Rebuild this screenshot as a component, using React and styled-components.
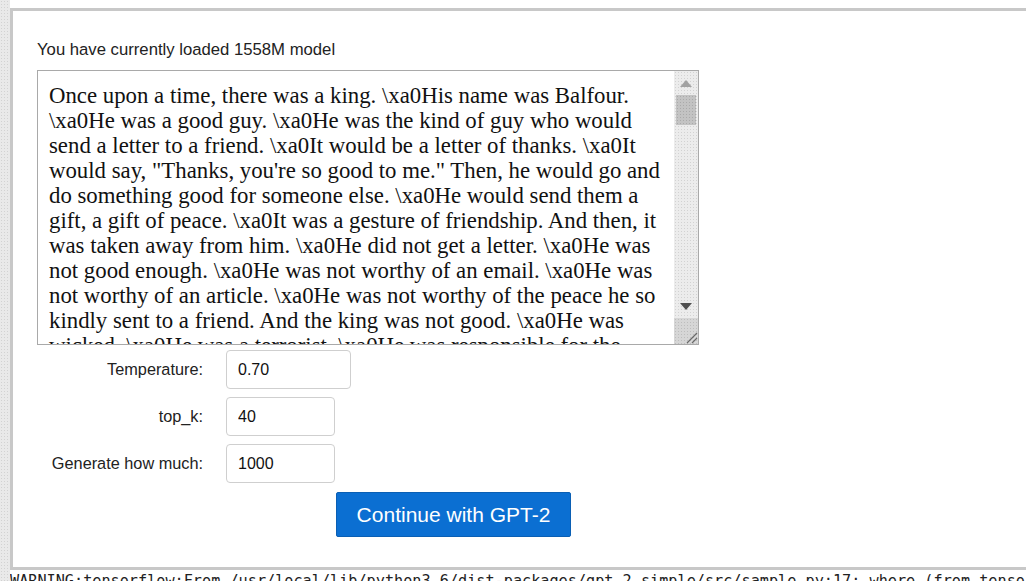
import React, { useState } from "react";
import styled, { createGlobalStyle } from "styled-components";

// ----- Global -----
const GlobalStyle = createGlobalStyle`
  html, body {
    margin: 0;
    padding: 0;
    background: #ffffff;
    overflow: hidden;
  }
  * {
    box-sizing: border-box;
  }
`;

const dots = `
  background-color: #e9e9e9;
  background-image: radial-gradient(#d2d2d2 0.6px, transparent 0.8px);
  background-size: 3px 3px;
`;

// ----- Styled Components -----
const Page = styled.div`
  display: flex;
  width: 1026px;
  height: 581px;
  overflow: hidden;
`;

const Strip = styled.div`
  flex: 0 0 10px;
  ${dots}
`;

const Main = styled.div`
  flex: 1;
  display: flex;
  flex-direction: column;
  padding-top: 8px;
  padding-right: 6px;
`;

const Frame = styled.div`
  border: 3px solid #c8c8c8;
  background: #fff;
  padding: 30px 24px 30px;
  display: flex;
  flex-direction: column;
  font-family: "Liberation Sans", Arial, sans-serif;
  color: #222;
`;

const Notice = styled.p`
  margin: 0 0 11px;
  font-size: 16.7px;
  line-height: 18px;
`;

const TextBox = styled.div`
  display: flex;
  width: 662px;
  height: 275px;
  border: 1px solid #a9a9a9;
  background: #fff;
`;

const Story = styled.textarea`
  flex: 1;
  border: none;
  outline: none;
  resize: none;
  overflow: hidden;
  white-space: pre;
  padding: 12px 0 0 11px;
  margin: 0;
  font-family: "Liberation Serif", "Times New Roman", serif;
  font-size: 22.8px;
  line-height: 25px;
  color: #111;
  background: transparent;
`;

const Scrollbar = styled.div`
  flex: 0 0 24px;
  display: flex;
  flex-direction: column;
  ${dots}
  background-color: #ececec;
`;

const ArrowButton = styled.div`
  flex: 0 0 ${({ tall }) => tall}px;
  display: flex;
  align-items: center;
  justify-content: center;
`;

const Triangle = styled.span`
  width: 0;
  height: 0;
  border-left: 6px solid transparent;
  border-right: 6px solid transparent;
  ${({ up, color }) =>
    up
      ? `border-bottom: 7px solid ${color};`
      : `border-top: 7px solid ${color};`}
`;

const Thumb = styled.div`
  flex: 0 0 30px;
  margin: 0 2px;
  background-color: #c3c3c3;
  background-image: radial-gradient(#aaaaaa 0.6px, transparent 0.8px);
  background-size: 3px 3px;
`;

const Track = styled.div`
  flex: 1;
`;

const Corner = styled.div`
  flex: 0 0 26px;
  background-color: #d6d6d6;
  background-image: radial-gradient(#bdbdbd 0.6px, transparent 0.8px);
  background-size: 3px 3px;
  display: flex;
  align-items: flex-end;
  justify-content: flex-end;
`;

const Settings = styled.div`
  display: grid;
  grid-template-columns: 166px auto;
  column-gap: 23px;
  row-gap: 8px;
  margin-top: 5px;
  align-items: center;
  justify-items: start;
`;

const Label = styled.label`
  justify-self: end;
  font-size: 16.3px;
  color: #222;
`;

const Field = styled.input`
  width: ${({ wide }) => (wide ? 125 : 109)}px;
  height: 39px;
  border: 1px solid #cfcfcf;
  border-radius: 4px;
  padding: 0 11px;
  font-family: "Liberation Sans", Arial, sans-serif;
  font-size: 16px;
  color: #111;
  outline: none;
`;

const Submit = styled.button`
  align-self: flex-start;
  margin: 9px 0 0 299px;
  width: 235px;
  height: 45px;
  border: 1px solid #0a5fb4;
  border-radius: 2px;
  background: #0b6fd2;
  color: #fff;
  font-family: "Liberation Sans", Arial, sans-serif;
  font-size: 21px;
  cursor: pointer;
`;

const Log = styled.pre`
  margin: 0;
  padding: 2px 0 0 0;
  font-family: "DejaVu Sans Mono", "Liberation Mono", monospace;
  font-size: 15.2px;
  line-height: 18px;
  color: #222;
  white-space: pre;
  overflow: hidden;
`;

const storyText = [
  "Once upon a time, there was a king. \\xa0His name was Balfour.",
  "\\xa0He was a good guy. \\xa0He was the kind of guy who would",
  "send a letter to a friend. \\xa0It would be a letter of thanks. \\xa0It",
  "would say, \"Thanks, you're so good to me.\" Then, he would go and",
  "do something good for someone else. \\xa0He would send them a",
  "gift, a gift of peace. \\xa0It was a gesture of friendship. And then, it",
  "was taken away from him. \\xa0He did not get a letter. \\xa0He was",
  "not good enough. \\xa0He was not worthy of an email. \\xa0He was",
  "not worthy of an article. \\xa0He was not worthy of the peace he so",
  "kindly sent to a friend. And the king was not good. \\xa0He was",
  "wicked. \\xa0He was a terrorist. \\xa0He was responsible for the",
].join("\n");

// ----- Main Component -----
const App = () => {
  const [text, setText] = useState(storyText);
  const [temperature, setTemperature] = useState("0.70");
  const [topK, setTopK] = useState("40");
  const [length, setLength] = useState("1000");

  return (
    <>
      <GlobalStyle />
      <Page>
        <Strip />
        <Main>
          <Frame>
            <Notice>You have currently loaded 1558M model</Notice>

            <TextBox>
              <Story value={text} onChange={(e) => setText(e.target.value)} />
              <Scrollbar>
                <ArrowButton tall={24}>
                  <Triangle up color="#a3a3a3" />
                </ArrowButton>
                <Thumb />
                <Track />
                <ArrowButton tall={24}>
                  <Triangle color="#505050" />
                </ArrowButton>
                <Corner>
                  <svg width="14" height="14" viewBox="0 0 14 14">
                    <path d="M13 3 L3 13 M13 8 L8 13" stroke="#6a6a6a" strokeWidth="1.2" />
                  </svg>
                </Corner>
              </Scrollbar>
            </TextBox>

            <Settings>
              <Label>Temperature:</Label>
              <Field wide value={temperature} onChange={(e) => setTemperature(e.target.value)} />
              <Label>top_k:</Label>
              <Field value={topK} onChange={(e) => setTopK(e.target.value)} />
              <Label>Generate how much:</Label>
              <Field value={length} onChange={(e) => setLength(e.target.value)} />
            </Settings>

            <Submit>Continue with GPT-2</Submit>
          </Frame>
          <Log>WARNING:tensorflow:From /usr/local/lib/python3.6/dist-packages/gpt_2_simple/src/sample.py:17: where (from tensorflow.python.ops.array_ops) is deprecated</Log>
        </Main>
      </Page>
    </>
  );
};

export default App;
